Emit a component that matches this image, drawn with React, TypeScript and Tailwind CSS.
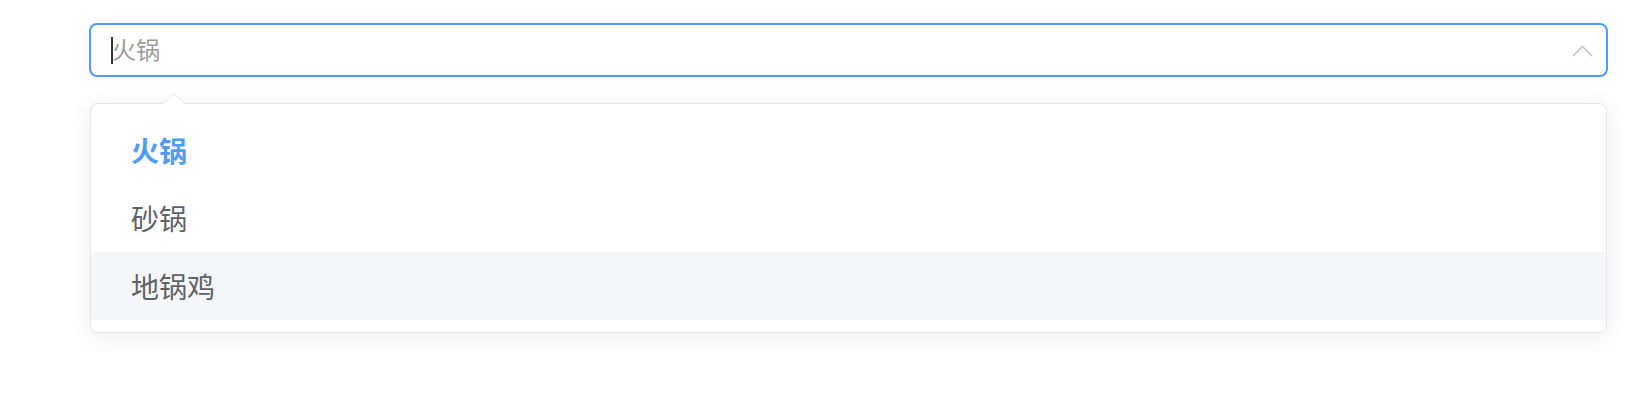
import React from "react";

const font = { fontFamily: '"Noto Sans CJK SC", "Noto Sans", sans-serif' };

export default function App() {
  const items = [
    { label: "火锅", selected: true, hover: false },
    { label: "砂锅", selected: false, hover: false },
    { label: "地锅鸡", selected: false, hover: true },
  ];
  return (
    <div className="w-[1640px] h-[402px] bg-white" style={font}>
      <div className="pl-[89px] pt-[23px] w-[1608px]">
        <div className="h-[54px] border-2 border-[#4f9bf7] rounded-[8px] flex items-center pl-[20px] pr-[13px]">
          <div className="flex-1 flex items-center">
            <span className="w-[2px] h-[27px] bg-[#333333] mr-[-1px]"></span>
            <span className="text-[24px] leading-none text-[#9d9d9d] -mt-[2px]">火锅</span>
          </div>
          <svg width="21" height="12" viewBox="0 0 21 12" className="mt-[1px]">
            <path d="M1 11 L10.5 1.5 L20 11" fill="none" stroke="#c0c4cc" strokeWidth="1.6" />
          </svg>
        </div>
        <div className="relative mt-[26px] mx-[1px] border border-[#e4e7ed] rounded-[8px] bg-white py-[12px] shadow-[0_4px_24px_rgba(0,0,0,0.08)]">
          <svg width="24" height="12" viewBox="0 0 24 12" className="absolute left-[71px] top-[-11px]">
            <path d="M0 12 L12 1 L24 12 Z" fill="#ffffff" />
            <path d="M0 11.5 L12 0.8 L24 11.5" fill="none" stroke="#e4e7ed" strokeWidth="1" />
          </svg>
          {items.map((it) => (
            <div
              key={it.label}
              className={
                "h-[68px] leading-[68px] px-[40px] text-[28px] " +
                (it.hover ? "bg-[#f5f7fa] " : "") +
                (it.selected ? "text-[#4f9cf7] font-bold" : "text-[#606266]")
              }
            >
              {it.label}
            </div>
          ))}
        </div>
      </div>
    </div>
  );
}
